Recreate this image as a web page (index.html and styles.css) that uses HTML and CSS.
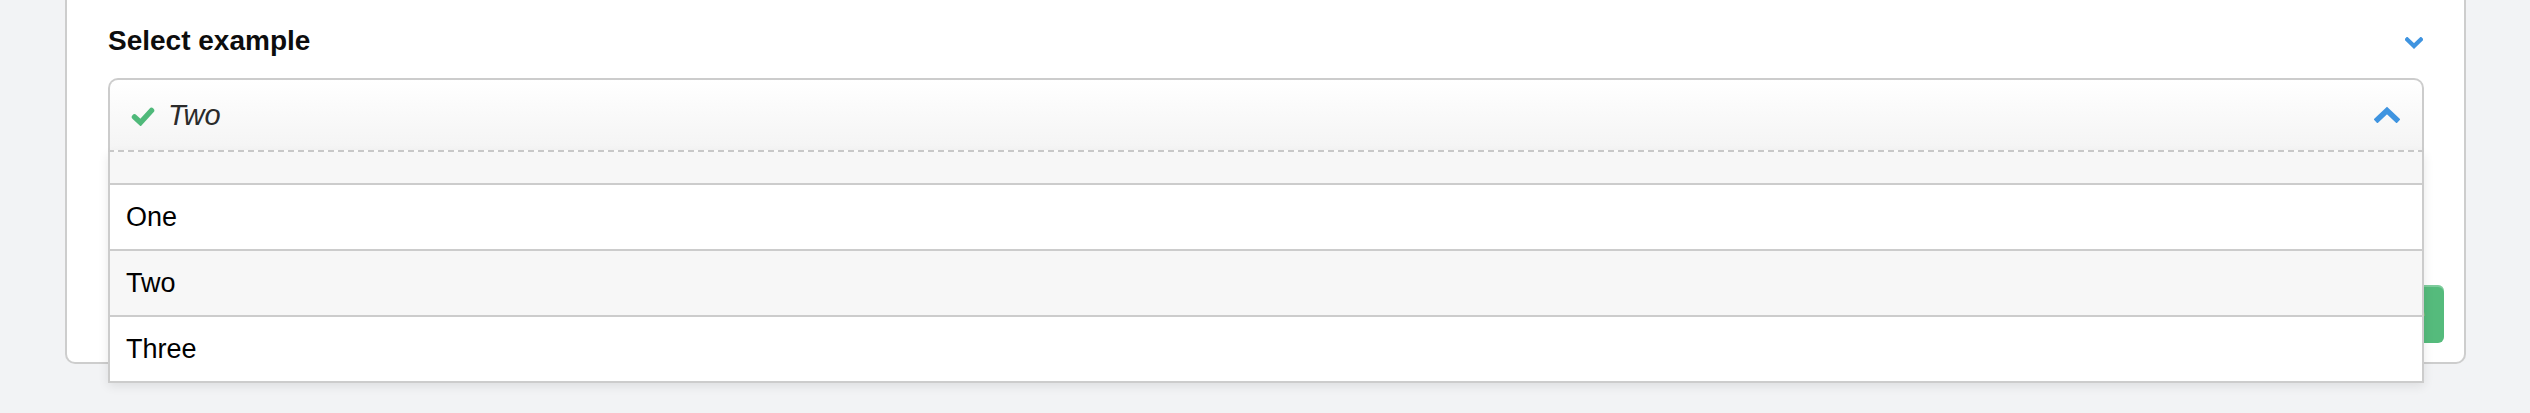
FILE: index.html
```html
<!DOCTYPE html>
<html lang="en">
<head>
<meta charset="utf-8">
<title>Select example</title>
<link rel="stylesheet" href="styles.css">
</head>
<body>
<div class="card">
  <div class="card-body">
    <div class="section-head">
      <h2 class="section-title">Select example</h2>
      <svg class="chev-down" width="18" height="12" viewBox="0 0 18 12" aria-hidden="true">
        <polyline points="2.2,2.5 9,9 15.8,2.5" fill="none" stroke="#3f94e0" stroke-width="4.2" stroke-linecap="square" stroke-linejoin="miter"/>
      </svg>
    </div>
    <div class="select">
      <div class="select-control">
        <svg class="check" width="24" height="19" viewBox="0 0 24 19" aria-hidden="true">
          <polyline points="3.5,10 9.5,15.5 20.5,3.5" fill="none" stroke="#4fb97a" stroke-width="5.5" stroke-linecap="round" stroke-linejoin="miter"/>
        </svg>
        <span class="select-value">Two</span>
        <svg class="chev-up" width="26" height="17" viewBox="0 0 26 17" aria-hidden="true">
          <polyline points="3.5,13.5 13,4.5 22.5,13.5" fill="none" stroke="#3f94e0" stroke-width="5.5" stroke-linecap="square" stroke-linejoin="miter"/>
        </svg>
      </div>
      <ul class="select-menu">
        <li class="option option-empty"></li>
        <li class="option">One</li>
        <li class="option option-hover">Two</li>
        <li class="option">Three</li>
      </ul>
    </div>
  </div>
  <div class="card-footer">
    <button class="btn-save" type="button">Save</button>
  </div>
</div>
</body>
</html>
```

FILE: styles.css
```css
html, body {
  margin: 0;
  padding: 0;
}

body {
  background: #f2f3f5;
  font-family: "Liberation Sans", Arial, sans-serif;
  width: 2530px;
  height: 413px;
  overflow: hidden;
}

.card {
  margin-left: 65px;
  width: 2401px;
  box-sizing: border-box;
  background: #fff;
  border: 2px solid #cdcdcd;
  border-top: 0;
  border-radius: 0 0 10px 10px;
}

.card-body {
  padding: 0 40px 0 41px;
}

.section-head {
  display: flex;
  align-items: center;
  justify-content: space-between;
  padding-top: 25px;
  height: 32px;
}

.section-title {
  margin: 0;
  font-size: 28px;
  line-height: 32px;
  font-weight: bold;
  color: #0d0d0d;
}

.chev-down {
  display: block;
  margin-top: 4px;
  margin-right: 1px;
}

.select {
  position: relative;
  margin-top: 21px;
}

.select-control {
  display: flex;
  align-items: center;
  height: 70px;
  padding: 0 22px 0 21px;
  border: 2px solid #cccccc;
  border-bottom: 2px dashed #cccccc;
  border-radius: 10px 10px 0 0;
  background: linear-gradient(#ffffff, #f4f4f4);
}

.check {
  display: block;
  flex: none;
  margin-top: 2px;
}

.select-value {
  flex: 1;
  margin-left: 13px;
  font-size: 29px;
  font-style: italic;
  color: #2b2b2b;
}

.chev-up {
  display: block;
  flex: none;
  margin-top: -2px;
}

.select-menu {
  position: absolute;
  top: 100%;
  left: 0;
  right: 0;
  margin: 0;
  padding: 0;
  list-style: none;
  background: #fff;
  border: 2px solid #cccccc;
  border-top: 0;
  box-shadow: 0 3px 10px rgba(0, 0, 0, 0.09);
  z-index: 2;
}

.option {
  height: 64px;
  display: flex;
  align-items: center;
  padding-left: 16px;
  font-size: 27px;
  color: #000;
  border-top: 2px solid #cccccc;
  background: #fff;
}

.option-empty {
  height: 31px;
  border-top: 0;
  background: #f7f7f7;
}

.option-hover {
  background: #f7f7f7;
}

.card-footer {
  display: flex;
  justify-content: flex-end;
  padding: 133px 20px 19px;
}

.btn-save {
  height: 58px;
  padding: 0 19px;
  border: 0;
  border-radius: 6px;
  background: #55bb7c;
  box-shadow: inset 0 2px 0 rgba(255, 255, 255, 0.25);
  color: #fffbe6;
  font-family: "Liberation Sans", Arial, sans-serif;
  font-size: 27px;
}
```
